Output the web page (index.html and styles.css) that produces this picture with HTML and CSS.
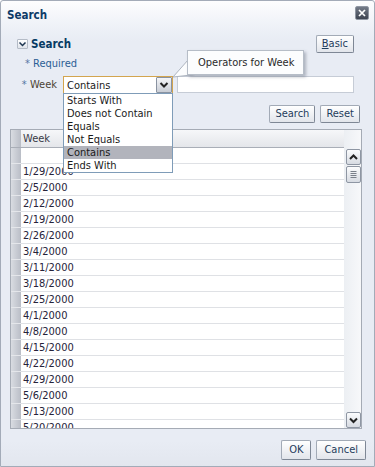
FILE: index.html
```html
<!DOCTYPE html>
<html>
<head>
<meta charset="utf-8">
<link rel="stylesheet" href="styles.css">
</head>
<body>
<div class="dialog">
  <div class="titlebar">
    <span class="title">Search</span>
    <span class="close"><svg width="12" height="12" viewBox="0 0 12 12"><path d="M3 3 L9 9 M9 3 L3 9" stroke="#fff" stroke-width="1.7" fill="none"/></svg></span>
  </div>

  <div class="panel-head">
    <span class="toggle"><svg width="9" height="8" viewBox="0 0 9 8"><polyline points="1.5,2.5 4.5,5.5 7.5,2.5" stroke="#1d3550" stroke-width="1.5" fill="none"/></svg></span>
    <span class="panel-title">Search</span>
    <button class="btn"><u>B</u>asic</button>
  </div>

  <div class="required"><span class="ast">*</span> Required</div>

  <div class="field-row">
    <div class="label"><span class="ast">*</span> Week</div>
    <div class="select-wrap">
      <div class="select">
        <span>Contains</span>
        <span class="drop"><svg width="14" height="14" viewBox="0 0 14 14"><polyline points="3.5,5 7,8.5 10.5,5" stroke="#222" stroke-width="2" fill="none"/></svg></span>
      </div>
      <ul class="options">
        <li>Starts With</li>
        <li>Does not Contain</li>
        <li>Equals</li>
        <li>Not Equals</li>
        <li class="sel">Contains</li>
        <li>Ends With</li>
      </ul>
    </div>
    <div class="input"></div>
    <svg class="tail" width="34" height="26" viewBox="0 0 34 26"><polygon points="19,4 4,21 31,18" fill="#fcfdfe" stroke="#aeb5c0" stroke-width="1"/></svg>
    <div class="tooltip">Operators for Week</div>
  </div>

  <div class="actions">
    <button class="btn">Search</button>
    <button class="btn">Reset</button>
  </div>

  <div class="table">
    <div class="tmain">
      <div class="thead"><span class="gut"></span><span class="th">Week</span></div>
      <div class="row"><span class="gut"></span><span class="cell"></span></div>
      <div class="row"><span class="gut"></span><span class="cell">1/29/2000</span></div>
      <div class="row"><span class="gut"></span><span class="cell">2/5/2000</span></div>
      <div class="row"><span class="gut"></span><span class="cell">2/12/2000</span></div>
      <div class="row"><span class="gut"></span><span class="cell">2/19/2000</span></div>
      <div class="row"><span class="gut"></span><span class="cell">2/26/2000</span></div>
      <div class="row"><span class="gut"></span><span class="cell">3/4/2000</span></div>
      <div class="row"><span class="gut"></span><span class="cell">3/11/2000</span></div>
      <div class="row"><span class="gut"></span><span class="cell">3/18/2000</span></div>
      <div class="row"><span class="gut"></span><span class="cell">3/25/2000</span></div>
      <div class="row"><span class="gut"></span><span class="cell">4/1/2000</span></div>
      <div class="row"><span class="gut"></span><span class="cell">4/8/2000</span></div>
      <div class="row"><span class="gut"></span><span class="cell">4/15/2000</span></div>
      <div class="row"><span class="gut"></span><span class="cell">4/22/2000</span></div>
      <div class="row"><span class="gut"></span><span class="cell">4/29/2000</span></div>
      <div class="row"><span class="gut"></span><span class="cell">5/6/2000</span></div>
      <div class="row"><span class="gut"></span><span class="cell">5/13/2000</span></div>
      <div class="row"><span class="gut"></span><span class="cell">5/20/2000</span></div>
    </div>
    <div class="tscroll">
      <span class="sb"><svg width="13" height="14" viewBox="0 0 13 14"><polyline points="3,9 6.5,5.5 10,9" stroke="#222" stroke-width="2" fill="none"/></svg></span>
      <span class="sb thumb"><svg width="13" height="15" viewBox="0 0 13 15"><path d="M3.5 4.5 H9.5 M3.5 6.5 H9.5 M3.5 8.5 H9.5 M3.5 10.5 H9.5" stroke="#7a808a" stroke-width="1" fill="none"/></svg></span>
      <span class="sb down"><svg width="13" height="14" viewBox="0 0 13 14"><polyline points="3,5.5 6.5,9 10,5.5" stroke="#222" stroke-width="2" fill="none"/></svg></span>
    </div>
  </div>

  <div class="footer">
    <button class="btn big">OK</button>
    <button class="btn big">Cancel</button>
  </div>
</div>
</body>
</html>
```

FILE: styles.css
```css
* { box-sizing: border-box; }
html, body { margin: 0; padding: 0; }
body {
  width: 375px;
  height: 467px;
  overflow: hidden;
  font-family: "DejaVu Sans Condensed", "DejaVu Sans", sans-serif;
  font-stretch: condensed;
  font-size: 11px;
  color: #222;
  background: #fff;
}
.dialog {
  width: 375px;
  height: 467px;
  border: 1px solid #a3abb8;
  border-radius: 3px 3px 0 0;
  background: linear-gradient(#fdfdfe 0, #eef1f7 26px, #e8ecf4 40px, #e8ecf4 440px, #e2e6ee 466px);
  display: flex;
  flex-direction: column;
}
.titlebar {
  height: 27px;
  display: flex;
  align-items: flex-start;
  padding: 0 5px 0 6px;
}
.title {
  flex: 1;
  font-weight: bold;
  font-size: 11.5px;
  color: #0d3b68;
  line-height: 14px;
  margin-top: 7px;
}
.close {
  width: 14px;
  height: 14px;
  margin-top: 5px;
  border: 1px solid #8f96a2;
  border-radius: 2px;
  background: linear-gradient(#737a87, #3d4451);
  display: flex;
  align-items: center;
  justify-content: center;
}
.panel-head {
  height: 18px;
  margin-top: 7px;
  padding: 0 20px 0 16px;
  display: flex;
  align-items: center;
}
.toggle {
  width: 11px;
  height: 10px;
  border: 1px solid #b4bbc6;
  border-radius: 1px;
  background: linear-gradient(#ffffff, #e0e4eb);
  display: flex;
  align-items: center;
  justify-content: center;
  margin-right: 3px;
}
.panel-title {
  flex: 1;
  font-weight: bold;
  font-size: 11.5px;
  color: #063a63;
}
.btn {
  height: 18px;
  padding: 0 5px;
  font-family: "DejaVu Sans Condensed", "DejaVu Sans", sans-serif;
  font-stretch: condensed;
  font-size: 11px;
  color: #1f3c5c;
  border: 1px solid #a2aab6;
  border-right-color: #7e8795;
  border-bottom-color: #7e8795;
  border-radius: 2px;
  background: linear-gradient(#ffffff, #e2e5eb);
  line-height: 16px;
}
.btn u { text-decoration: underline; }
.btn.big { height: 20px; padding: 0 7px; }
.required {
  margin-top: 4px;
  height: 14px;
  line-height: 14px;
  padding-left: 24px;
  color: #2b5e95;
}
.ast { color: #5677a3; }
.field-row {
  margin-top: 5px;
  height: 18px;
  display: flex;
  align-items: flex-start;
  position: relative;
}
.label {
  width: 62px;
  padding-right: 6px;
  text-align: right;
  line-height: 18px;
  color: #4d4434;
}
.select-wrap {
  position: relative;
  width: 110px;
  height: 18px;
}
.select {
  height: 18px;
  border: 1px solid #d3a54f;
  background: #fff;
  display: flex;
  align-items: center;
  padding-left: 3px;
  color: #1a1a1a;
}
.drop {
  margin-left: auto;
  width: 16px;
  height: 16px;
  border: 1px solid #8a93a1;
  border-radius: 1px;
  background: linear-gradient(#f4f5f8, #c9cdd5);
  display: flex;
  align-items: center;
  justify-content: center;
}
.options {
  position: absolute;
  top: 17px;
  left: 0;
  width: 110px;
  margin: 0;
  padding: 0;
  list-style: none;
  border: 1px solid #7f9cb8;
  background: #fff;
  z-index: 5;
}
.options li {
  height: 13px;
  line-height: 13px;
  padding-left: 3px;
  color: #1a1a1a;
}
.options li.sel { background: #b2b4bc; }
.input {
  margin-left: 4px;
  width: 177px;
  height: 17px;
  border: 1px solid #c6ccd6;
  background: #fff;
}
.tail {
  position: absolute;
  left: 168px;
  top: -20px;
  z-index: 6;
}
.tooltip {
  position: absolute;
  left: 186px;
  top: -26px;
  width: 117px;
  height: 25px;
  padding-left: 10px;
  line-height: 23px;
  border: 1px solid #b6bdc7;
  background: #fcfdfe;
  box-shadow: 2px 2px 3px rgba(60, 70, 90, 0.35);
  color: #2a2a2a;
  white-space: nowrap;
  z-index: 7;
}
.actions {
  margin-top: 11px;
  height: 18px;
  padding-right: 14px;
  display: flex;
  justify-content: flex-end;
  gap: 5px;
}
.table {
  margin: 6px 12px 0 9px;
  height: 300px;
  border: 1px solid #a5abb5;
  background: #fff;
  display: flex;
  flex: none;
}
.tmain {
  flex: 1;
  display: flex;
  flex-direction: column;
  overflow: hidden;
}
.thead {
  height: 18px;
  flex: none;
  display: flex;
  border-bottom: 1px solid #a9aeb7;
  background: linear-gradient(#f6f7f9, #e4e6ea);
}
.gut {
  width: 10px;
  flex: none;
  background: linear-gradient(to right, #d9dce2, #b9bdc6);
}
.th {
  padding-left: 2px;
  line-height: 17px;
  color: #3a3a46;
}
.row {
  height: 16px;
  flex: none;
  display: flex;
}
.row .gut { border-bottom: 1px solid #e4e6ea; }
.cell {
  flex: 1;
  padding-left: 2px;
  line-height: 15px;
  border-bottom: 1px solid #dfe1e5;
  color: #26233a;
}
.tscroll {
  width: 17px;
  flex: none;
  padding-top: 19px;
  padding-left: 2px;
  display: flex;
  flex-direction: column;
  background: linear-gradient(to right, #eceff3, #f7f8fa);
}
.sb {
  width: 15px;
  height: 16px;
  border: 1px solid #8e96a3;
  border-radius: 2px;
  background: linear-gradient(#fbfcfd, #d7dbe2);
  display: flex;
  align-items: center;
  justify-content: center;
  flex: none;
}
.sb.thumb { height: 17px; margin-top: 1px; }
.sb.down { margin-top: auto; margin-bottom: 0; }
.footer {
  margin-top: 11px;
  height: 20px;
  padding-right: 8px;
  display: flex;
  justify-content: flex-end;
  gap: 5px;
}
```
